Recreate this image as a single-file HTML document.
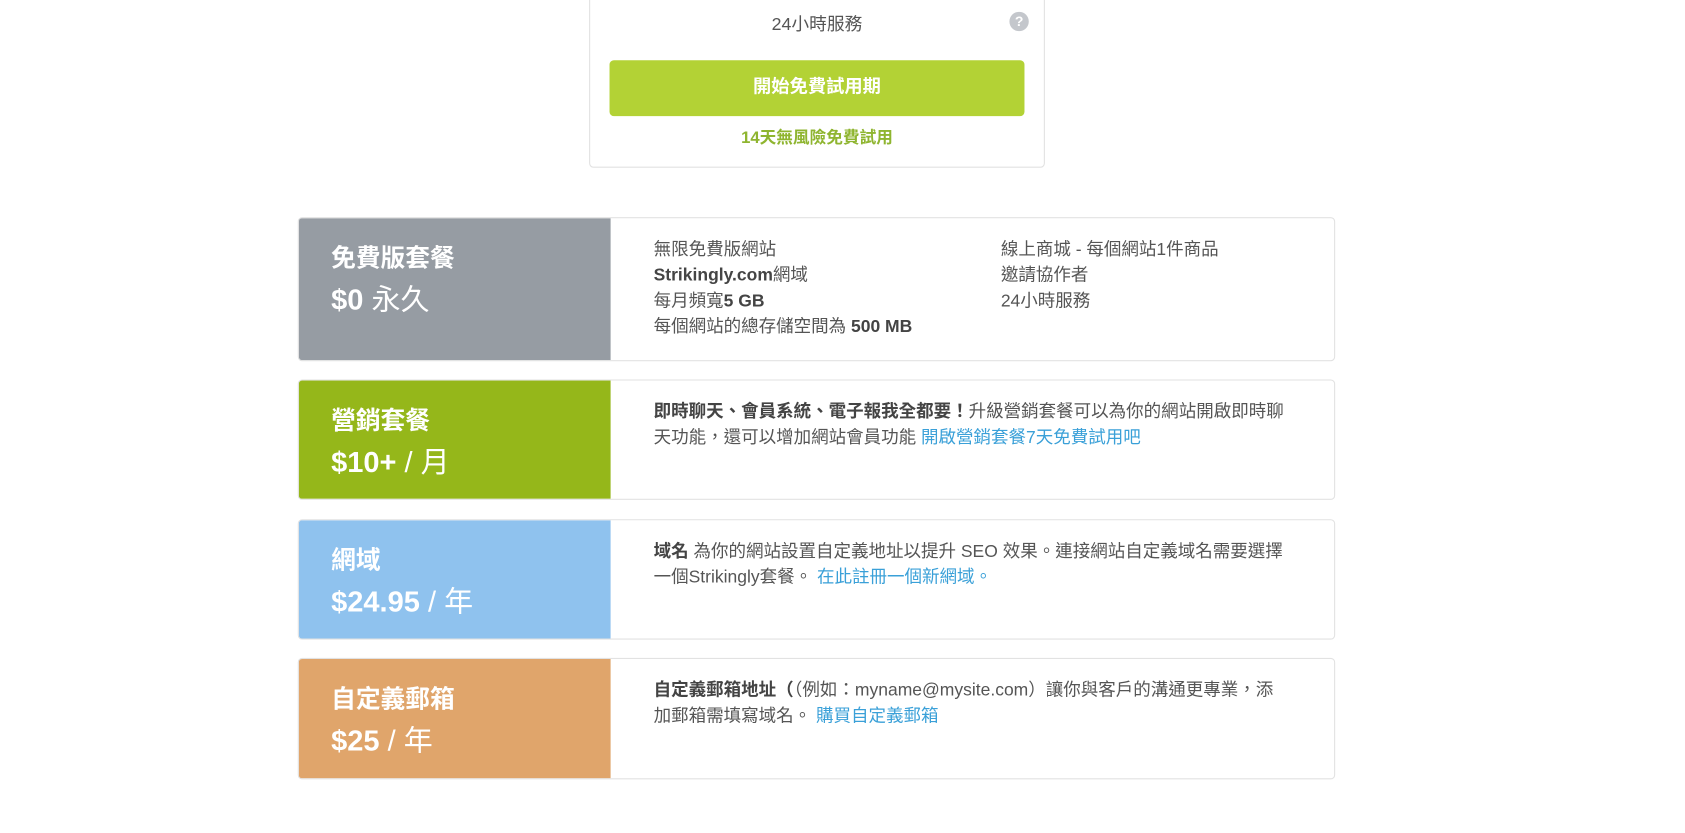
<!DOCTYPE html>
<html><head><meta charset="utf-8"><style>
body{margin:0;width:1685px;height:833px;background:#fff;font-family:"Liberation Sans","Noto Sans CJK TC",sans-serif;overflow:hidden;color:#555}
#w{position:relative;width:1560px;height:771px;transform:scale(1.075);transform-origin:0 0}
.card{position:absolute;left:548px;top:-10px;width:422px;height:164px;border:1px solid #e2e2e2;border-radius:4px}
.svc{position:absolute;left:548px;width:424px;top:9px;text-align:center;font-size:16.5px;color:#555}
.q{position:absolute;left:939px;top:11px;width:18px;height:18px;border-radius:50%;background:#c4c7cc;color:#fff;font-size:13px;font-weight:bold;text-align:center;line-height:18px}
.btn{position:absolute;left:567px;top:56px;width:386px;height:52px;background:#b3d235;border-radius:4px;color:#fff;font-weight:bold;font-size:17px;text-align:center;line-height:50px}
.trial{position:absolute;left:548px;width:424px;top:116px;text-align:center;color:#8fb530;font-weight:bold;font-size:15.5px}
.row{position:absolute;left:277px;width:965px;border:1px solid #e2e2e2;border-radius:4px;overflow:hidden;box-sizing:border-box}
.lp{position:absolute;left:0;top:0;bottom:0;width:290px;color:#fff}
.lp h3{margin:0;position:absolute;left:30px;top:18px;font-size:23px;font-weight:bold}
.lp .p{position:absolute;left:30px;top:54px;font-size:27px;white-space:nowrap}
.lp .p b{font-weight:bold}
.ct{position:absolute;left:330px;top:17px;font-size:16.3px;line-height:24px;color:#555;width:630px}
.ct b{color:#444}
a{color:#3aa0d8;text-decoration:none}
</style></head><body><div id="w">
<div class="card"></div>
<div class="svc">24小時服務</div>
<div class="q">?</div>
<div class="btn">開始免費試用期</div>
<div class="trial">14天無風險免費試用</div>

<div class="row" style="top:202px;height:134px">
<div class="lp" style="background:#969ca3"><h3>免費版套餐</h3><div class="p"><b>$0</b> 永久</div></div>
<div class="ct">無限免費版網站<br><b>Strikingly.com</b>網域<br>每月頻寬<b>5 GB</b><br>每個網站的總存儲空間為 <b>500 MB</b></div>
<div class="ct" style="left:653px;width:300px">線上商城 - 每個網站1件商品<br>邀請協作者<br>24小時服務</div>
</div>

<div class="row" style="top:353px;height:112px">
<div class="lp" style="background:#95b71a"><h3>營銷套餐</h3><div class="p"><b>$10+</b> / 月</div></div>
<div class="ct" style="width:600px"><b>即時聊天、會員系統、電子報我全都要！</b>升級營銷套餐可以為你的網站開啟即時聊天功能，還可以增加網站會員功能 <a>開啟營銷套餐7天免費試用吧</a></div>
</div>

<div class="row" style="top:483px;height:112px">
<div class="lp" style="background:#8fc2ee"><h3>網域</h3><div class="p"><b>$24.95</b> / 年</div></div>
<div class="ct" style="width:590px"><b>域名</b> 為你的網站設置自定義地址以提升 SEO 效果。連接網站自定義域名需要選擇一個Strikingly套餐。 <a>在此註冊一個新網域。</a></div>
</div>

<div class="row" style="top:612px;height:113px">
<div class="lp" style="background:#e0a56b"><h3>自定義郵箱</h3><div class="p"><b>$25</b> / 年</div></div>
<div class="ct" style="width:585px"><b>自定義郵箱地址（</b>（例如：myname@mysite.com）讓你與客戶的溝通更專業，添加郵箱需填寫域名。 <a>購買自定義郵箱</a></div>
</div>
</div></body></html>
